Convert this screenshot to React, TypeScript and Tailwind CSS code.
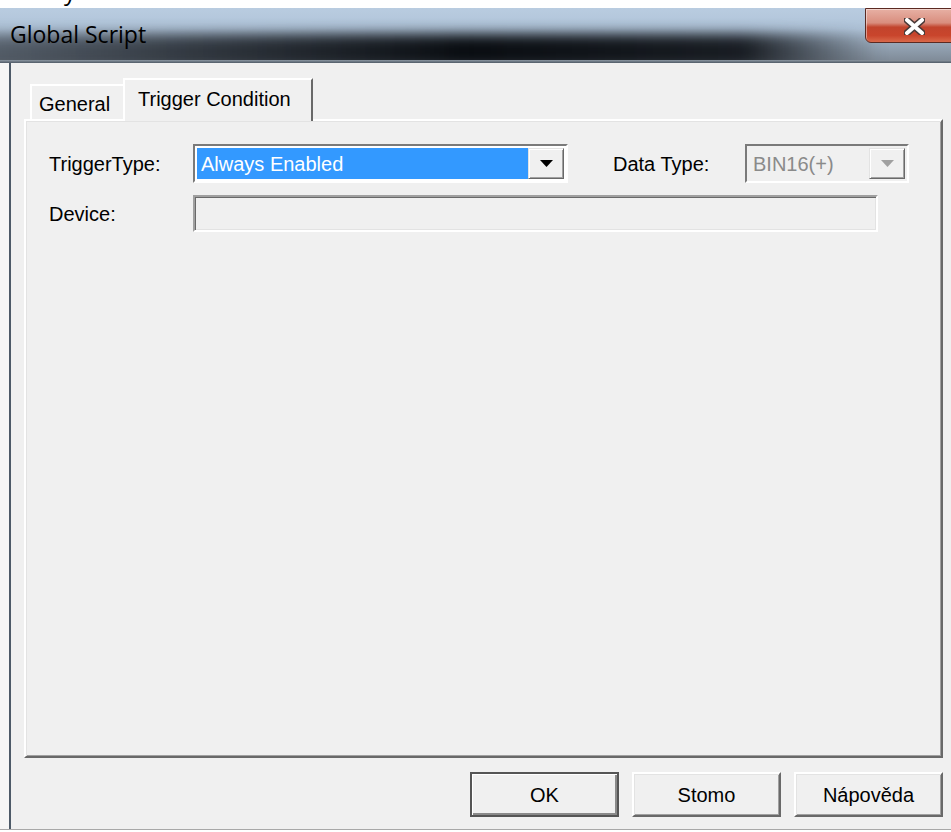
import React from 'react'

const ui = "font-['Liberation_Sans',Arial,sans-serif] text-[20px] text-black"

function CloseButton() {
  return (
    <div className="absolute left-[865px] top-0 h-[35px] w-[100px] rounded-bl-[6px] border border-[#5b2a22] bg-[linear-gradient(180deg,#e7b0a4_0%,#d98e7e_42%,#c2442d_55%,#c9452c_80%,#d9694a_100%)] shadow-[inset_1px_1px_0_rgba(255,255,255,0.45)]">
      <svg
        className="absolute left-[38px] top-[9px]"
        width="21"
        height="17"
        viewBox="0 0 21 17"
      >
        <path d="M3 2 L18 15 M18 2 L3 15" stroke="#4a3a38" strokeWidth="7" strokeLinecap="round" />
        <path d="M3 2 L18 15 M18 2 L3 15" stroke="#ffffff" strokeWidth="4" strokeLinecap="round" />
      </svg>
    </div>
  )
}

function TitleBar() {
  return (
    <div className="relative h-[52px] overflow-hidden bg-[linear-gradient(180deg,#b9cce0_0%,#b0c4d9_40%,#98a8b9_68%,#808c99_100%)]">
      <div className="absolute bottom-[-8px] left-[-40px] right-[70px] h-[34px] bg-[linear-gradient(90deg,rgba(40,46,54,0.5)_0%,rgba(20,24,30,0.75)_25%,rgba(5,8,12,0.97)_55%,rgba(12,15,20,0.9)_85%,rgba(40,46,54,0)_100%)] blur-[7px]" />
      <span className="relative ml-[10px] mt-[12px] block font-['Open_Sans','Noto_Sans',sans-serif] text-[23px] leading-[28px] text-black">
        Global Script
      </span>
      <CloseButton />
    </div>
  )
}

function Combo({
  width,
  text,
  disabled = false,
}: {
  width: string
  text: string
  disabled?: boolean
}) {
  return (
    <div
      className={`${width} flex h-[39px] border-2 border-t-[#7a7a7a] border-l-[#7a7a7a] border-b-[#ffffff] border-r-[#ffffff] shadow-[inset_1px_1px_0_#3f3f3f,inset_-1px_-1px_0_#e3e3e3]`}
    >
      <div className={`flex flex-1 p-[2px] ${disabled ? 'bg-[#f0f0f0]' : 'bg-white'}`}>
        <div
          className={`flex flex-1 items-center pl-[4px] ${
            disabled ? 'text-[#8a8a8a]' : 'bg-[#3399ff] text-white'
          }`}
        >
          {text}
        </div>
        <div className="flex w-[36px] items-center justify-center border border-t-[#e3e3e3] border-l-[#e3e3e3] border-b-[#696969] border-r-[#696969] bg-[#f0f0f0] shadow-[inset_1px_1px_0_#ffffff,inset_-1px_-1px_0_#a0a0a0]">
          <svg width="13" height="7" viewBox="0 0 13 7">
            <path d="M0 0 H13 L6.5 7 Z" fill={disabled ? '#a0a0a0' : '#000000'} />
          </svg>
        </div>
      </div>
    </div>
  )
}

function Button({ label, primary = false }: { label: string; primary?: boolean }) {
  return (
    <div
      className={`flex h-[45px] w-[149px] items-center justify-center bg-[#f0f0f0] ${
        primary
          ? 'border-2 border-[#555555] shadow-[inset_1px_1px_0_#ffffff,inset_-2px_-2px_0_#8a8a8a]'
          : 'border-2 border-t-[#ffffff] border-l-[#ffffff] border-b-[#696969] border-r-[#696969] shadow-[inset_1px_1px_0_#e3e3e3,inset_-1px_-1px_0_#a0a0a0]'
      }`}
    >
      {label}
    </div>
  )
}

export default function App() {
  return (
    <div className={`${ui} flex h-[832px] w-[951px] flex-col overflow-hidden bg-white`}>
      {/* strip of the window behind */}
      <div className="h-[8px] overflow-hidden">
        <span className="ml-[64px] -mt-[21px] block font-['Open_Sans',sans-serif] text-[24px] leading-[24px]">
          y
        </span>
      </div>

      <TitleBar />
      <div className="h-[3px] bg-[linear-gradient(180deg,#8d98a3,#4f5a66)]" />

      <div className="flex flex-1">
        <div className="w-[9px] bg-[#f6f6f6]" />
        <div className="flex flex-1 flex-col border-l-2 border-[#4d5a68] bg-[#f0f0f0] pl-[13px] pr-[8px] pt-[15px]">
          {/* tab strip */}
          <div className="flex h-[41px] items-end pl-[6px]">
            <div className="flex h-[35px] w-[93px] items-center border-l-2 border-t-2 border-white pl-[7px] pt-[3px]">
              General
            </div>
            <div className="relative z-10 -mb-[2px] flex h-[43px] w-[190px] items-start border-l-2 border-r-2 border-t-2 border-l-white border-t-white border-r-[#696969] bg-[#f0f0f0] pl-[13px] pt-[4px]">
              Trigger Condition
            </div>
          </div>

          {/* tab page */}
          <div className="h-[639px] border-2 border-t-white border-l-white border-b-[#696969] border-r-[#696969] pl-[23px] pt-[23px] shadow-[inset_1px_1px_0_#e3e3e3,inset_-1px_-1px_0_#a0a0a0]">
            <div className="flex h-[39px] items-center">
              <span className="w-[144px]">TriggerType:</span>
              <Combo width="w-[375px]" text="Always Enabled" />
              <span className="ml-[45px] w-[132px]">Data Type:</span>
              <Combo width="w-[164px]" text="BIN16(+)" disabled />
            </div>
            <div className="mt-[12px] flex h-[37px] items-center">
              <span className="w-[144px]">Device:</span>
              <div className="h-[37px] w-[685px] border-2 border-t-[#a0a0a0] border-l-[#a0a0a0] border-b-[#ffffff] border-r-[#ffffff] bg-[#f0f0f0] shadow-[inset_1px_1px_0_#696969,inset_-1px_-1px_0_#e3e3e3]" />
            </div>
          </div>

          {/* dialog buttons */}
          <div className="mt-[14px] flex justify-end gap-[13px]">
            <Button label="OK" primary />
            <Button label="Stomo" />
            <Button label="Nápověda" />
          </div>
          <div className="flex-1" />
        </div>
      </div>
      <div className="h-[1px] bg-[#a8a8a8]" />
      <div className="h-[2px] bg-white" />
    </div>
  )
}
